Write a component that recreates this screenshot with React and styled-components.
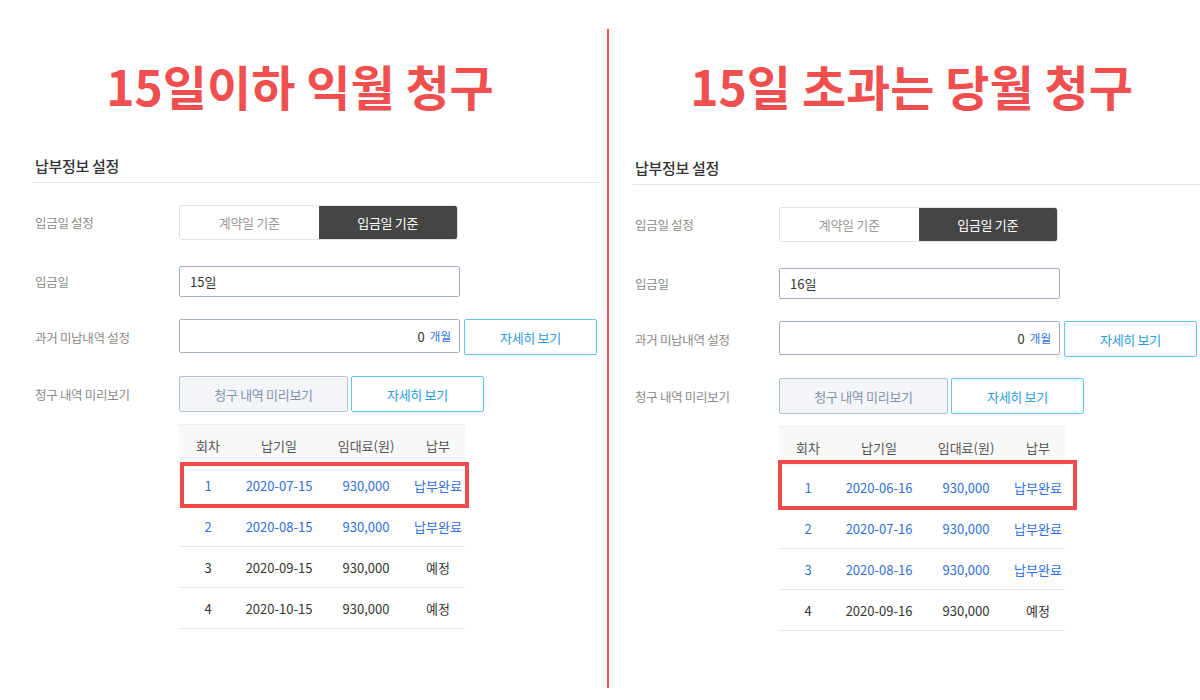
import React from "react"
import styled, { createGlobalStyle } from "styled-components"

const GlobalStyle = createGlobalStyle`
  html, body {
    margin: 0;
    padding: 0;
    background: #ffffff;
    font-family: "Noto Sans CJK KR", "Noto Sans", sans-serif;
  }
`

const panels = [
  {
    title: "15일이하 익월 청구",
    day: "15일",
    width: "607px",
    headTop: 42,
    titlePad: "0 7px 0 0",
    formPad: "0 7px 0 33px",
    mark: { top: -3, bottom: -3, left: 1, right: -4 },
    rows: [
      { no: 1, date: "2020-07-15", paid: true },
      { no: 2, date: "2020-08-15", paid: true },
      { no: 3, date: "2020-09-15", paid: false },
      { no: 4, date: "2020-10-15", paid: false },
    ],
  },
  {
    title: "15일 초과는 당월 청구",
    day: "16일",
    width: "auto",
    headTop: 44,
    titlePad: "0 0 0 14px",
    formPad: "0 0 0 24px",
    mark: { top: -7, bottom: -3, left: -1, right: -12 },
    rows: [
      { no: 1, date: "2020-06-16", paid: true },
      { no: 2, date: "2020-07-16", paid: true },
      { no: 3, date: "2020-08-16", paid: true },
      { no: 4, date: "2020-09-16", paid: false },
    ],
  },
]

function SettingPanel({ data }) {
  return (
    <Panel $width={data.width}>
      <Title $pad={data.titlePad}>{data.title}</Title>
      <Form $pad={data.formPad}>
        <SectionHead $top={data.headTop}>납부정보 설정</SectionHead>

        <Row $gap={22}>
          <Label>입금일 설정</Label>
          <Segment>
            <SegItem>계약일 기준</SegItem>
            <SegItem $active>입금일 기준</SegItem>
          </Segment>
        </Row>

        <Row $gap={26}>
          <Label>입금일</Label>
          <TextBox $height={31}>{data.day}</TextBox>
        </Row>

        <Row $gap={22}>
          <Label>과거 미납내역 설정</Label>
          <TextBox $height={34} $right>
            0<Unit>개월</Unit>
          </TextBox>
          <OutlineButton $width={133}>자세히 보기</OutlineButton>
        </Row>

        <Row $gap={21}>
          <Label>청구 내역 미리보기</Label>
          <GrayButton>청구 내역 미리보기</GrayButton>
          <OutlineButton $width={133}>자세히 보기</OutlineButton>
        </Row>

        <Table>
          <HeadRow>
            <Cell>회차</Cell>
            <Cell>납기일</Cell>
            <Cell>임대료(원)</Cell>
            <Cell>납부</Cell>
          </HeadRow>
          {data.rows.map((r, i) => (
            <BodyRow key={r.no} $paid={r.paid}>
              <Cell>{r.no}</Cell>
              <Cell>{r.date}</Cell>
              <Cell>930,000</Cell>
              <Cell>{r.paid ? "납부완료" : "예정"}</Cell>
              {i === 0 && <Mark {...data.mark} />}
            </BodyRow>
          ))}
        </Table>
      </Form>
    </Panel>
  )
}

export default function App() {
  return (
    <>
      <GlobalStyle />
      <Page>
        <SettingPanel data={panels[0]} />
        <Divider />
        <SettingPanel data={panels[1]} />
      </Page>
    </>
  )
}

const Page = styled.div`
  display: flex;
  width: 1200px;
  height: 700px;
  overflow: hidden;
  background: #fff;
`

const Divider = styled.div`
  flex: 0 0 2px;
  margin-top: 29px;
  height: 659px;
  background: #f05353;
`

const Panel = styled.section`
  flex: ${(p) => (p.$width === "auto" ? "1 1 auto" : `0 0 ${p.$width}`)};
  padding-top: 57px;
  min-width: 0;
`

const Title = styled.h1`
  margin: 0;
  padding: ${(p) => p.$pad};
  font-size: 48px;
  line-height: 57px;
  font-weight: 700;
  color: #f04f4f;
  text-align: center;
  white-space: nowrap;
`

const Form = styled.div`
  padding: ${(p) => p.$pad};
`

const SectionHead = styled.h2`
  margin: ${(p) => p.$top}px 0 0;
  padding: 0 0 6px 2px;
  font-size: 15px;
  line-height: 20px;
  font-weight: 500;
  color: #333;
  letter-spacing: -0.3px;
  border-bottom: 1px solid #e6e6e6;
`

const Row = styled.div`
  display: flex;
  align-items: center;
  gap: 4px;
  margin-top: ${(p) => p.$gap}px;
  padding-left: 2px;
`

const Label = styled.div`
  flex: 0 0 140px;
  font-size: 12.5px;
  color: #8a8a8a;
  letter-spacing: -0.3px;
`

const Segment = styled.div`
  display: flex;
  width: 279px;
  height: 35px;
  box-sizing: border-box;
  border: 1px solid #e2e2e2;
  border-radius: 3px;
  overflow: hidden;
`

const SegItem = styled.div`
  flex: 1;
  display: flex;
  align-items: center;
  justify-content: center;
  font-size: 13px;
  letter-spacing: -0.3px;
  color: ${(p) => (p.$active ? "#fff" : "#999")};
  background: ${(p) => (p.$active ? "#454545" : "#fff")};
`

const TextBox = styled.div`
  display: flex;
  align-items: center;
  justify-content: ${(p) => (p.$right ? "flex-end" : "flex-start")};
  align-self: flex-start;
  width: 281px;
  height: ${(p) => p.$height}px;
  box-sizing: border-box;
  padding: 0 8px 0 10px;
  border: 1px solid #a3b1c8;
  border-radius: 2px;
  font-size: 13px;
  color: #333;
`

const Unit = styled.span`
  margin-left: 5px;
  font-size: 11.5px;
  color: #2f6fe0;
`

const OutlineButton = styled.div`
  display: flex;
  align-items: center;
  justify-content: center;
  width: ${(p) => p.$width}px;
  height: 36px;
  box-sizing: border-box;
  border: 1px solid #63c6f0;
  border-radius: 2px;
  font-size: 13px;
  letter-spacing: -0.3px;
  color: #2a9ce3;
`

const GrayButton = styled(OutlineButton)`
  width: 169px;
  margin-right: -1px;
  background: #f3f5f9;
  border-color: #b5c0d2;
  color: #8392aa;
`

const Table = styled.div`
  width: 286px;
  margin: 12px 0 0 146px;
  font-size: 13px;
`

const HeadRow = styled.div`
  display: grid;
  grid-template-columns: 58px 84px 90px 54px;
  height: 40px;
  align-items: center;
  background: #f8f8f8;
  border-top: 1px solid #eeeeee;
  color: #555;
`

const BodyRow = styled.div`
  position: relative;
  display: grid;
  grid-template-columns: 58px 84px 90px 54px;
  height: 41px;
  box-sizing: border-box;
  align-items: center;
  border-bottom: 1px solid #e4e4e4;
  color: ${(p) => (p.$paid ? "#2f6fe0" : "#333")};
`

const Cell = styled.div`
  text-align: center;
  white-space: nowrap;
`

const Mark = styled.div`
  position: absolute;
  top: ${(p) => p.top}px;
  bottom: ${(p) => p.bottom}px;
  left: ${(p) => p.left}px;
  right: ${(p) => p.right}px;
  border: 4px solid #ef4b4b;
`
